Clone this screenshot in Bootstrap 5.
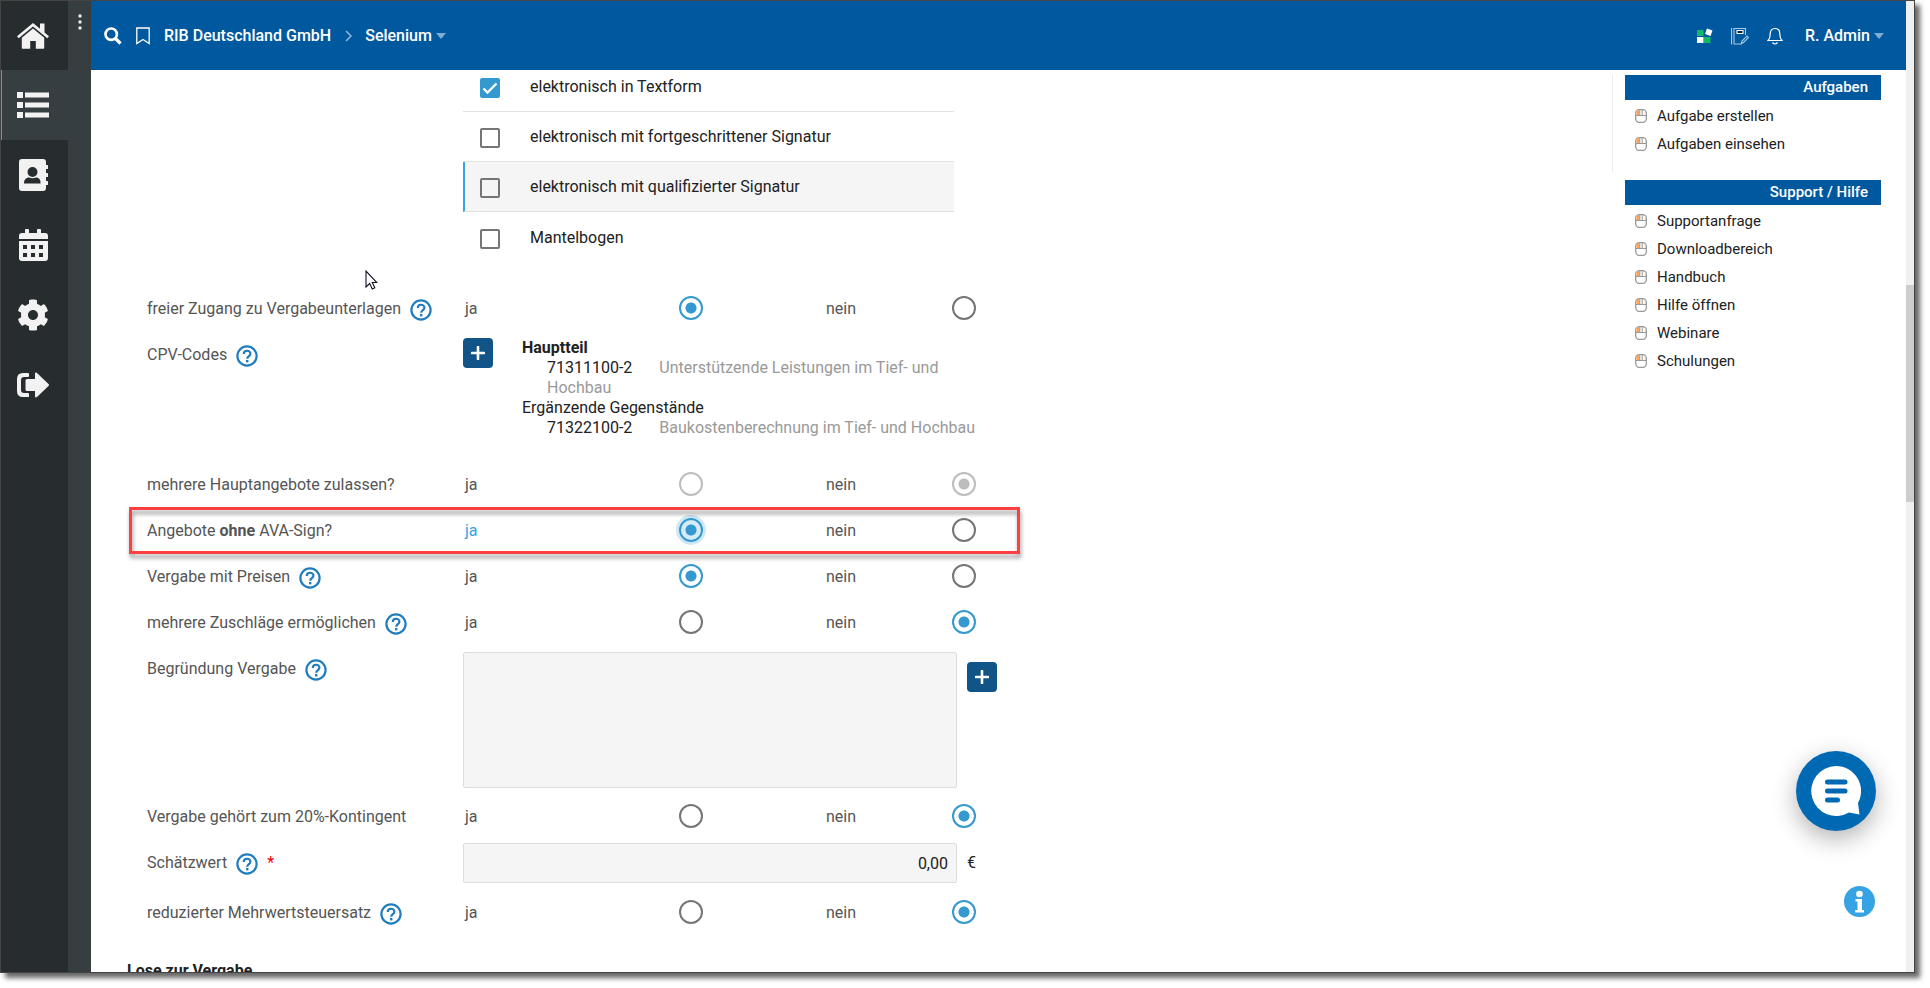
<!DOCTYPE html>
<html lang="de">
<head>
<meta charset="utf-8">
<meta name="viewport" content="width=device-width, initial-scale=1">
<title>RIB Deutschland GmbH – Selenium</title>
<link href="https://cdn.jsdelivr.net/npm/bootstrap@5.3.0/dist/css/bootstrap.min.css" rel="stylesheet">
<style>
  body { font-family: Roboto, "Liberation Sans", sans-serif; font-size: 16px; line-height: 20px; color: #212121; background: #fff; height: 100vh; overflow: hidden; padding: 0 15px 15px 0; }
  .app-window { height: 100%; border: 1px solid #444; box-shadow: 5px 5px 5px rgba(0,0,0,.6); }
  .side-nav { width: 67px; background: #272d2f; }
  .side-nav a { height: 70px; color: #f2f2f2; padding-right: 3px; }
  .side-nav a:first-child { height: 69px; }
  .side-nav a.active { background: #373e41; border-left: 1px solid #36a3e4; padding-right: 4px; }
  .side-strip { width: 23px; background: #373e41; color: #eee; padding-top: 13px; }
  .top-bar { height: 69px; background: #00589e; font-weight: 500; padding: 0 22px 0 13px; }
  .top-bar a, .top-bar button { color: #fff; }
  .plain-btn { background: none; border: 0; padding: 0; display: flex; align-items: center; font-weight: 500; }
  .left-tools { gap: 14px; }
  .right-tools { gap: 18px; }
  .user-name { margin-left: 4px; }
  .crumbs { gap: 11px; }
  .scroll-track { width: 8px; background: #f0f0f0; }
  .scroll-track span { display: block; position: absolute; width: 8px; top: 29.2%; height: 22.4%; background: #cdcdcd; }
  .form-area { width: 894px; padding-left: 56px; }
  .sig-list { margin-left: 316px; width: 491px; margin-bottom: 24px; }
  .sig-item { height: 50px; padding: 3px 0 0 17px; border-bottom: 1px solid #e2e2e2; }
  .sig-item:first-child { height: 42px; padding-top: 0; padding-bottom: 5px; }
  .sig-item:last-child { border: 0; }
  .sig-item.hovered { background: #f5f5f5; border-left: 2px solid #36a3e4; padding-left: 15px; }
  .sig-item label { margin-left: 30px; flex: 1; padding-bottom: 2px; }
  .tick { appearance: none; width: 20px; height: 20px; margin: 0; border: 2px solid #757575; border-radius: 2px; background: transparent; }
  .tick:checked { border-color: #3399ce; background: #3399ce url("data:image/svg+xml,%3Csvg xmlns='http://www.w3.org/2000/svg' viewBox='0 0 16 16'%3E%3Cpath d='M1.500 8.500l4 4L14.500 3.500' fill='none' stroke='%23fff' stroke-width='2.400'/%3E%3C/svg%3E") center/16px no-repeat; }
  .field-row { display: grid; grid-template-columns: 316fr 494fr 10fr 30fr; position: relative; min-height: 46px; width: 850px; }
  .field-label { height: 46px; display: flex; align-items: center; color: #555; gap: 9px; }
  .choice { display: grid; grid-template-columns: 214px 147px 126px 24px; align-items: center; height: 46px; padding-left: 2px; color: #555; grid-column: 2 / 5; }
  .choice .chosen { color: #36a3e4; }
  .dot { appearance: none; width: 24px; height: 24px; margin: 0 0 2px; border: 2px solid #757575; border-radius: 50%; background: #fff; }
  .dot:checked { border-color: #3399ce; background: radial-gradient(circle, #3399ce 5px, #fff 6px); }
  .dot:disabled { border-color: #bdbdbd; }
  .dot:disabled:checked { background: radial-gradient(circle, #bdbdbd 5px, #fff 6px); }
  .dot.focused { background: radial-gradient(circle, #3399ce 5px, #d6ebf5 6px); box-shadow: 0 0 0 3px #cfe6f3; }
  .help { width: 22px; height: 22px; color: #1f7dbf; margin-top: 2px; }
  .required { color: #f00; }
  .add-btn { width: 30px; height: 30px; border: 0; border-radius: 4px; background: #115588; color: #fff; display: flex; align-items: center; justify-content: center; padding: 0; }
  .cpv { padding: 6px 0 24px; gap: 29px; grid-column: 2 / 5; }
  .cpv dd { margin: 0 0 0 25px; }
  .cpv dt { font-weight: 400; }
  .cpv dt:first-child { font-weight: 700; }
  .cpv dd span { color: #999; margin-left: 27px; }
  .grey-field { background: #f5f5f5; border: 1px solid #ddd; border-radius: 2px; width: 100%; color: #212121; }
  .grey-field:focus { outline: 0; }
  .reason-cell { padding: 6px 0; }
  .reason-cell textarea { display: block; height: 136px; resize: none; }
  .value-input { height: 40px; padding: 0 8px; }
  .section-title { font-size: 16px; line-height: 20px; font-weight: 700; margin: 25px 0 0 -20px; }
  .highlight { position: absolute; inset: -1px -23px 0 -18px; border: 3px solid #ff4040; filter: drop-shadow(1px 4px 2px rgba(0,0,0,.4)); pointer-events: none; }
  .side-panel { width: 269px; margin-right: 25px; padding-top: 5px; font-size: 15px; }
  .panel-tasks { border-left: 1px solid #ececec; height: 97px; margin-bottom: 8px; }
  .panel-block { padding-left: 12px; }
  .panel-help { margin-left: 1px; }
  .panel-block h2 { background: #00589e; color: #fff; font-size: 15px; line-height: 25px; font-weight: 500; text-align: right; padding-right: 13px; margin: 0 0 2px; }
  .panel-block li { height: 28px; padding-left: 10px; gap: 10px; display: flex; align-items: center; }
  .panel-block a { color: #212121; text-decoration: none; }
  .chat-btn { position: absolute; right: 38px; bottom: 141px; width: 80px; height: 80px; border: 0; border-radius: 50%; background: #0069b4; padding: 0; box-shadow: 0 8px 24px rgba(0,0,0,.3); }
  .info-btn { position: absolute; right: 39px; bottom: 55px; padding: 0; border: 0; background: none; line-height: 0; }
  .pointer { position: absolute; left: 364px; top: 269px; }
</style>
</head>
<body>
<svg class="d-none" xmlns="http://www.w3.org/2000/svg">
  <symbol id="i-help" viewBox="0 0 22 22"><circle cx="11" cy="11" r="9.600" fill="none" stroke="currentColor" stroke-width="2.200"/><path d="M7.800 9c0-4.400 6.600-4.200 6.600-.3 0 2.300-3.200 2.500-3.200 5" fill="none" stroke="currentColor" stroke-width="2.200"/><rect x="10" y="15" width="2.400" height="2.400" fill="currentColor"/></symbol>
  <symbol id="i-mouse" viewBox="0 0 12 14"><rect x=".7" y=".7" width="10.600" height="12.600" rx="3.500" fill="#fff" stroke="#999" stroke-width="1.300"/><path d="M1.500 2.500Q2 1.300 4.500 1.300V6h-3z" fill="#ffa35c"/><path d="M1 6.500h10M4.800 1v5.500M7.200 1v5.500" stroke="#999" stroke-width="1"/></symbol>
  <symbol id="i-plus" viewBox="0 0 14 14"><path d="M7 1v12M1 7h12" stroke="currentColor" stroke-width="2.600" stroke-linecap="round"/></symbol>
</svg>
<div class="app-window d-flex position-relative">
  <nav class="side-nav flex-shrink-0 d-flex flex-column" aria-label="Hauptnavigation">
    <a href="#" class="d-flex align-items-center justify-content-center" aria-label="Start"><svg width="32" height="26" viewBox="0 0 32 26" fill="currentColor"><path d="M16 0 0 13.300l1.700 2L16 3.600l14.300 11.700 1.700-2-4.500-3.700V.5H23v5.200z"/><path d="M16 5.600 4.800 14.800V25q0 .8.800.8h7.600V18h5.600v7.800h7.600q.8 0 .8-.8V14.800z"/></svg></a>
    <a href="#" class="active d-flex align-items-center justify-content-center" aria-label="Liste"><svg width="32" height="28" viewBox="0 0 32 28" fill="currentColor"><path d="M0 1h6v6H0zM0 11h6v6H0zM0 21h6v6H0zM8 1.500h24v5H8zM8 11.500h24v5H8zM8 21.500h24v5H8z"/></svg></a>
    <a href="#" class="d-flex align-items-center justify-content-center" aria-label="Adressbuch"><svg width="29" height="32" viewBox="0 0 29 32"><path fill="currentColor" fill-rule="evenodd" d="M3 0h21q3 0 3 3v3h1.500q.5 0 .5.500v3q0 .5-.5.500H27v4h1.500q.5 0 .5.500v3q0 .5-.5.500H27v4h1.500q.5 0 .5.500v3q0 .5-.5.500H27v3q0 3-3 3H3q-3 0-3-3V3q0-3 3-3zm10.500 8a5 5 0 1 0 0 10 5 5 0 0 0 0-10zM5 24.600h16.500c.4-3.600-1.500-6.100-4.500-6.100-2.500 1-4.500 1-7 0-3 0-5.200 2.500-5 6.100z"/></svg></a>
    <a href="#" class="d-flex align-items-center justify-content-center" aria-label="Kalender"><svg width="29" height="32" viewBox="0 0 29 32"><path fill="currentColor" fill-rule="evenodd" d="M6 4V.8Q6 0 6.800 0h2.400q.8 0 .8.800V4h8V.8q0-.8.800-.8h2.400q.8 0 .8.800V4h4q3 0 3 3v3H0V7q0-3 3-3zM0 12h29v17q0 3-3 3H3q-3 0-3-3zm4 4v4h4v-4zm8 0v4h4v-4zm8 0v4h4v-4zM4 24v4h4v-4zm8 0v4h4v-4zm8 0v4h4v-4z"/></svg></a>
    <a href="#" class="d-flex align-items-center justify-content-center" aria-label="Einstellungen"><svg width="32" height="32" viewBox="0 0 512 512" fill="currentColor"><path d="M487.400 315.700l-42.600-24.600c4.300-23.200 4.300-47 0-70.200l42.600-24.600c4.900-2.800 7.100-8.600 5.500-14-11.100-35.600-30-67.800-54.700-94.600-3.800-4.100-10-5.100-14.800-2.300L380.800 110c-17.900-15.400-38.500-27.300-60.800-35.100V25.800c0-5.600-3.900-10.500-9.400-11.700-36.700-8.200-74.300-7.800-109.200 0-5.500 1.200-9.400 6.100-9.400 11.700V75c-22.200 7.900-42.800 19.800-60.800 35.100L88.700 85.500c-4.900-2.800-11-1.900-14.800 2.300-24.700 26.700-43.600 58.900-54.700 94.600-1.700 5.400.6 11.200 5.500 14L67.300 221c-4.300 23.200-4.300 47 0 70.200l-42.600 24.600c-4.900 2.800-7.100 8.600-5.500 14 11.100 35.600 30 67.800 54.700 94.600 3.800 4.100 10 5.100 14.800 2.300l42.600-24.600c17.900 15.400 38.500 27.300 60.800 35.100v49.200c0 5.600 3.900 10.500 9.400 11.700 36.700 8.200 74.300 7.800 109.200 0 5.500-1.200 9.400-6.100 9.400-11.700v-49.200c22.200-7.900 42.800-19.800 60.800-35.100l42.600 24.600c4.900 2.800 11 1.900 14.800-2.300 24.700-26.700 43.600-58.900 54.700-94.600 1.500-5.500-.7-11.300-5.600-14.100zM256 336c-44.100 0-80-35.900-80-80s35.900-80 80-80 80 35.900 80 80-35.900 80-80 80z"/></svg></a>
    <a href="#" class="d-flex align-items-center justify-content-center" aria-label="Abmelden"><svg width="32" height="26" viewBox="0 0 32 26"><path fill="currentColor" d="M12 25H6q-6 0-6-6V7q0-6 6-6h5q1 0 1 1v2q0 1-1 1H7Q4 5 4 8v10q0 3 3 3h4q1 0 1 1zM18 1.500Q18 .5 19 .5q.6 0 1.500 1L31.500 12q1 1 0 2L20.500 24.500q-2.500 2-2.500-.5v-5h-8q-1.500 0-1.500-1.500v-9Q8.500 7 10 7h8z"/></svg></a>
  </nav>
  <div class="side-strip flex-shrink-0"><svg width="4" height="16" viewBox="0 0 4 16" fill="currentColor" class="d-block mx-auto"><circle cx="2" cy="2" r="1.700"/><circle cx="2" cy="8" r="1.700"/><circle cx="2" cy="14" r="1.700"/></svg></div>

  <div class="flex-grow-1 d-flex flex-column overflow-hidden">
    <header class="top-bar flex-shrink-0 d-flex align-items-center justify-content-between">
      <div class="left-tools d-flex align-items-center">
        <button class="plain-btn" aria-label="Suchen"><svg width="18" height="18" viewBox="0 0 18 18" fill="none" stroke="#fff"><circle cx="7.200" cy="7.200" r="5.700" stroke-width="2.600"/><path d="M11.500 11.500l5 5" stroke-width="3.200"/></svg></button>
        <button class="plain-btn" aria-label="Lesezeichen"><svg width="14" height="18" viewBox="0 0 14 18" fill="none" stroke="#fff"><path d="M.8 1h12.400v15.500L7 12.500l-6.200 4z" stroke-width="1.300"/></svg></button>
        <nav class="crumbs d-flex align-items-center" aria-label="Pfad">
          <a href="#" class="text-decoration-none">RIB Deutschland GmbH</a>
          <svg width="12" height="12" viewBox="0 0 12 12" fill="none" stroke="#8db8dc" stroke-width="1.500"><path d="M4 1l5 5-5 5"/></svg>
          <button class="plain-btn">Selenium <svg class="ms-1" width="10" height="6" viewBox="0 0 10 6" fill="#80add4"><path d="M0 0h10L5 6z"/></svg></button>
        </nav>
      </div>
      <div class="right-tools d-flex align-items-center">
        <button class="plain-btn" aria-label="Apps"><svg width="16" height="16" viewBox="0 0 16 16"><path fill="#12b76a" d="M0 2h6.500v6H0zM7 9h6.500v6H7z"/><path fill="#fff" d="M0 9h6.500v6H0z"/><path fill="#fff" d="M10 .5l5.500 2-2 5.500-5.500-2z"/></svg></button>
        <button class="plain-btn" aria-label="Notizbuch"><svg width="18" height="18" viewBox="0 0 18 18" fill="none" stroke="#a9c9e4" stroke-width="1.100"><path d="M.6 1v16.500M3 1v16.500M3 1.500h11.500V8M3 17h6"/><path d="M6 3.500h6v3H6z" stroke="#fff" fill="#123"/><path d="M10 17l1-3 5-5 1.500 1.500-5 5z"/></svg></button>
        <button class="plain-btn" aria-label="Benachrichtigungen"><svg width="16" height="18" viewBox="0 0 16 18" fill="none" stroke="#fff" stroke-width="1.200"><path d="M1 13.500c1.500-1.500 2.200-3 2.200-6.500C3.200 3.500 5.300 1.500 8 1.500S12.800 3.500 12.800 7c0 3.500.7 5 2.200 6.500zM5.500 15.500q2.500 3 5 0"/></svg></button>
        <button class="plain-btn user-name">R. Admin <svg class="ms-1" width="10" height="6" viewBox="0 0 10 6" fill="#80add4"><path d="M0 0h10L5 6z"/></svg></button>
      </div>
    </header>

    <div class="d-flex flex-grow-1 justify-content-between overflow-hidden">
      <main class="form-area flex-shrink-0">
        <div class="sig-list">
          <div class="sig-item d-flex align-items-center"><input class="tick" type="checkbox" id="s1" checked><label for="s1">elektronisch in Textform</label></div>
          <div class="sig-item d-flex align-items-center"><input class="tick" type="checkbox" id="s2"><label for="s2">elektronisch mit fortgeschrittener Signatur</label></div>
          <div class="sig-item hovered d-flex align-items-center"><input class="tick" type="checkbox" id="s3"><label for="s3">elektronisch mit qualifizierter Signatur</label></div>
          <div class="sig-item d-flex align-items-center"><input class="tick" type="checkbox" id="s4"><label for="s4">Mantelbogen</label></div>
        </div>

        <div class="field-row">
          <div class="field-label">freier Zugang zu Vergabeunterlagen <svg class="help"><use href="#i-help"/></svg></div>
          <div class="choice"><label for="a1">ja</label><input class="dot" type="radio" name="a" id="a1" checked><label for="a2">nein</label><input class="dot" type="radio" name="a" id="a2"></div>
        </div>
        <div class="field-row">
          <div class="field-label">CPV-Codes <svg class="help"><use href="#i-help"/></svg></div>
          <div class="cpv d-flex align-items-start">
            <button class="add-btn flex-shrink-0" aria-label="CPV-Code hinzufügen"><svg width="14" height="14"><use href="#i-plus"/></svg></button>
            <dl class="mb-0"><dt>Hauptteil</dt><dd>71311100-2<span>Unterstützende Leistungen im Tief- und Hochbau</span></dd><dt>Ergänzende Gegenstände</dt><dd>71322100-2<span>Baukostenberechnung im Tief- und Hochbau</span></dd></dl>
          </div>
        </div>
        <div class="field-row">
          <div class="field-label">mehrere Hauptangebote zulassen?</div>
          <div class="choice"><label for="b1">ja</label><input class="dot" type="radio" name="b" id="b1" disabled><label for="b2">nein</label><input class="dot" type="radio" name="b" id="b2" checked disabled></div>
        </div>
        <div class="field-row">
          <div class="field-label"><span>Angebote <b>ohne</b> AVA-Sign?</span></div>
          <div class="choice"><label for="c1" class="chosen">ja</label><input class="dot focused" type="radio" name="c" id="c1" checked><label for="c2">nein</label><input class="dot" type="radio" name="c" id="c2"></div>
          <div class="highlight"></div>
        </div>
        <div class="field-row">
          <div class="field-label">Vergabe mit Preisen <svg class="help"><use href="#i-help"/></svg></div>
          <div class="choice"><label for="d1">ja</label><input class="dot" type="radio" name="d" id="d1" checked><label for="d2">nein</label><input class="dot" type="radio" name="d" id="d2"></div>
        </div>
        <div class="field-row">
          <div class="field-label">mehrere Zuschläge ermöglichen <svg class="help"><use href="#i-help"/></svg></div>
          <div class="choice"><label for="e1">ja</label><input class="dot" type="radio" name="e" id="e1"><label for="e2">nein</label><input class="dot" type="radio" name="e" id="e2" checked></div>
        </div>
        <div class="field-row">
          <label class="field-label" for="reason">Begründung Vergabe <svg class="help"><use href="#i-help"/></svg></label>
          <div class="reason-cell"><textarea id="reason" class="grey-field"></textarea></div>
          <div></div>
          <button class="add-btn mt-3" aria-label="Begründung hinzufügen"><svg width="14" height="14"><use href="#i-plus"/></svg></button>
        </div>
        <div class="field-row">
          <div class="field-label">Vergabe gehört zum 20%-Kontingent</div>
          <div class="choice"><label for="f1">ja</label><input class="dot" type="radio" name="f" id="f1"><label for="f2">nein</label><input class="dot" type="radio" name="f" id="f2" checked></div>
        </div>
        <div class="field-row align-items-center">
          <label class="field-label" for="value">Schätzwert <svg class="help"><use href="#i-help"/></svg><span class="required">*</span></label>
          <input id="value" class="grey-field text-end value-input" type="text" value="0,00">
          <div></div>
          <div>€</div>
        </div>
        <div class="field-row mt-1">
          <div class="field-label">reduzierter Mehrwertsteuersatz <svg class="help"><use href="#i-help"/></svg></div>
          <div class="choice"><label for="g1">ja</label><input class="dot" type="radio" name="g" id="g1"><label for="g2">nein</label><input class="dot" type="radio" name="g" id="g2" checked></div>
        </div>
        <h2 class="section-title">Lose zur Vergabe</h2>
      </main>

      <aside class="side-panel">
        <section class="panel-block panel-tasks">
          <h2>Aufgaben</h2>
          <ul class="list-unstyled mb-0">
            <li><svg width="12" height="14"><use href="#i-mouse"/></svg><a href="#">Aufgabe erstellen</a></li>
            <li><svg width="12" height="14"><use href="#i-mouse"/></svg><a href="#">Aufgaben einsehen</a></li>
          </ul>
        </section>
        <section class="panel-block panel-help">
          <h2>Support / Hilfe</h2>
          <ul class="list-unstyled mb-0">
            <li><svg width="12" height="14"><use href="#i-mouse"/></svg><a href="#">Supportanfrage</a></li>
            <li><svg width="12" height="14"><use href="#i-mouse"/></svg><a href="#">Downloadbereich</a></li>
            <li><svg width="12" height="14"><use href="#i-mouse"/></svg><a href="#">Handbuch</a></li>
            <li><svg width="12" height="14"><use href="#i-mouse"/></svg><a href="#">Hilfe öffnen</a></li>
            <li><svg width="12" height="14"><use href="#i-mouse"/></svg><a href="#">Webinare</a></li>
            <li><svg width="12" height="14"><use href="#i-mouse"/></svg><a href="#">Schulungen</a></li>
          </ul>
        </section>
      </aside>
    </div>
  </div>
  <div class="scroll-track flex-shrink-0"><span></span></div>

  <button class="chat-btn" aria-label="Chat"><svg width="50" height="50" viewBox="0 0 50 50"><path fill="#fff" d="M25 0a25 25 0 1 0 13 46.500l10.500 2L47 37A25 25 0 0 0 25 0z"/><path d="M16.500 16h17.500M16.500 25h17.500M16.500 34h10" stroke="#0069b4" stroke-width="5" stroke-linecap="round"/></svg></button>
  <button class="info-btn" aria-label="Information"><svg width="31" height="31" viewBox="0 0 31 31"><circle cx="15.500" cy="15.500" r="15.500" fill="#36a3e4"/><circle cx="15.500" cy="8" r="3.300" fill="#fff"/><path fill="#fff" d="M11.500 13h6.500v11h2v2.500h-8.800V24h2.300v-8.500h-2z"/></svg></button>
  <svg class="pointer" width="13" height="21" viewBox="0 0 13 21"><path d="M1 1v16l3.700-3.500 2.600 5.500 2.500-1.200-2.500-5.300h4.500z" fill="#fff" stroke="#112" stroke-width="1.100"/></svg>
</div>
<script src="https://cdn.jsdelivr.net/npm/bootstrap@5.3.0/dist/js/bootstrap.bundle.min.js"></script>
</body>
</html>
